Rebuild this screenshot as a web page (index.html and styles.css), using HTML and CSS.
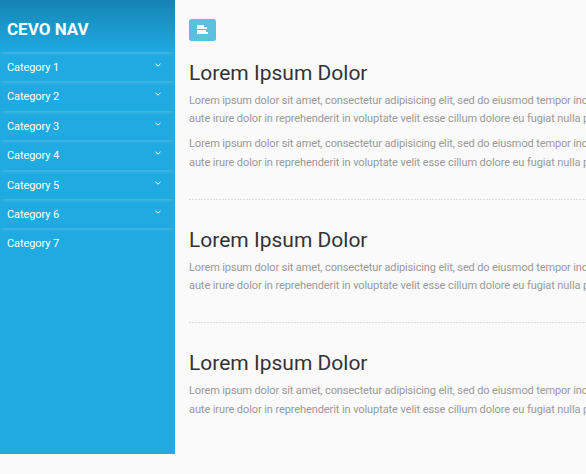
FILE: index.html
```html
<!DOCTYPE html>
<html lang="en">
<head>
<meta charset="utf-8">
<title>Cevo Nav</title>
<link rel="stylesheet" href="styles.css">
</head>
<body>
<div class="wrapper">
  <nav class="sidebar">
    <header class="sidebar-header"><h3>CEVO NAV</h3></header>
    <ul class="menu">
      <li><a>Category 1</a><svg class="chevron" viewBox="0 0 6 4"><path d="M.5 .8 3 3.2 5.5 .8"/></svg></li>
      <li><a>Category 2</a><svg class="chevron" viewBox="0 0 6 4"><path d="M.5 .8 3 3.2 5.5 .8"/></svg></li>
      <li><a>Category 3</a><svg class="chevron" viewBox="0 0 6 4"><path d="M.5 .8 3 3.2 5.5 .8"/></svg></li>
      <li><a>Category 4</a><svg class="chevron" viewBox="0 0 6 4"><path d="M.5 .8 3 3.2 5.5 .8"/></svg></li>
      <li><a>Category 5</a><svg class="chevron" viewBox="0 0 6 4"><path d="M.5 .8 3 3.2 5.5 .8"/></svg></li>
      <li><a>Category 6</a><svg class="chevron" viewBox="0 0 6 4"><path d="M.5 .8 3 3.2 5.5 .8"/></svg></li>
      <li><a>Category 7</a></li>
    </ul>
  </nav>
  <main class="content">
    <button class="toggle" aria-label="Toggle sidebar"><svg viewBox="0 0 11 9"><path d="M0 0h7v2H0zM0 2h10v2H0zM0 5h9v2H0zM0 7h11v2H0z"/></svg></button>
    <section>
      <h2>Lorem Ipsum Dolor</h2>
      <p>Lorem ipsum dolor sit amet, consectetur adipisicing elit, sed do eiusmod tempor incididunt ut labore<br>aute irure dolor in reprehenderit in voluptate velit esse cillum dolore eu fugiat nulla pariatur.</p>
      <p>Lorem ipsum dolor sit amet, consectetur adipisicing elit, sed do eiusmod tempor incididunt ut labore<br>aute irure dolor in reprehenderit in voluptate velit esse cillum dolore eu fugiat nulla pariatur.</p>
    </section>
    <div class="line"></div>
    <section>
      <h2>Lorem Ipsum Dolor</h2>
      <p>Lorem ipsum dolor sit amet, consectetur adipisicing elit, sed do eiusmod tempor incididunt ut labore<br>aute irure dolor in reprehenderit in voluptate velit esse cillum dolore eu fugiat nulla pariatur.</p>
    </section>
    <div class="line"></div>
    <section>
      <h2>Lorem Ipsum Dolor</h2>
      <p>Lorem ipsum dolor sit amet, consectetur adipisicing elit, sed do eiusmod tempor incididunt ut labore<br>aute irure dolor in reprehenderit in voluptate velit esse cillum dolore eu fugiat nulla pariatur.</p>
    </section>
  </main>
</div>
</body>
</html>
```
FILE: styles.css
```css
* { box-sizing: border-box; }
body {
  margin: 0;
  height: 474px;
  overflow: hidden;
  background: #fafafa;
  font-family: Roboto, sans-serif;
}
.wrapper { display: flex; align-items: flex-start; }
.sidebar {
  flex: 0 0 175px;
  height: 454px;
  overflow: hidden;
  background: #1faae2;
  color: #fff;
}
.sidebar-header {
  display: flex;
  align-items: center;
  height: 52px;
  padding: 6px 7px 1px;
  background: linear-gradient(#1584b3, #1faae2);
}
.sidebar-header h3 { margin: 0; font-size: 17px; font-weight: 700; }
.menu { margin: 0; padding: 0; list-style: none; }
.menu li {
  display: flex;
  justify-content: space-between;
  height: 29.4px;
  padding: 7px 14px 0 7px;
  font-size: 11px;
  letter-spacing: -.1px;
  line-height: 17px;
}
.sidebar-header,
.menu li:not(:last-child) { box-shadow: 0 3px 4px -2px rgba(255, 255, 255, .23); }
.chevron {
  width: 6px;
  height: 4px;
  margin-top: 4px;
  fill: none;
  stroke: #fff;
}
.content { flex: none; width: 411px; overflow: hidden; padding: 19px 0 0 14px; }
.toggle {
  display: flex;
  align-items: flex-start;
  justify-content: center;
  width: 27px;
  height: 22px;
  padding: 6px 0 0;
  border: 0;
  border-radius: 2.5px;
  background: #5bc0de;
}
.toggle svg { width: 11px; height: 9px; fill: #fff; }
section { padding-top: 19px; }
.toggle + section { padding-top: 19.6px; }
h2 {
  margin: 0 0 6px;
  color: #333;
  font-size: 21px;
  font-weight: 400;
  line-height: 25px;
}
p {
  margin: 0 0 7px;
  color: #999;
  font-size: 11px;
  letter-spacing: -.09px;
  line-height: 18.4px;
  white-space: nowrap;
}
p::first-line { letter-spacing: -.125px; }
.line {
  height: 1px;
  margin: 26.6px 0 9px;
  background: repeating-linear-gradient(90deg, #ddd 0 2px, transparent 2px 3px);
}
```
